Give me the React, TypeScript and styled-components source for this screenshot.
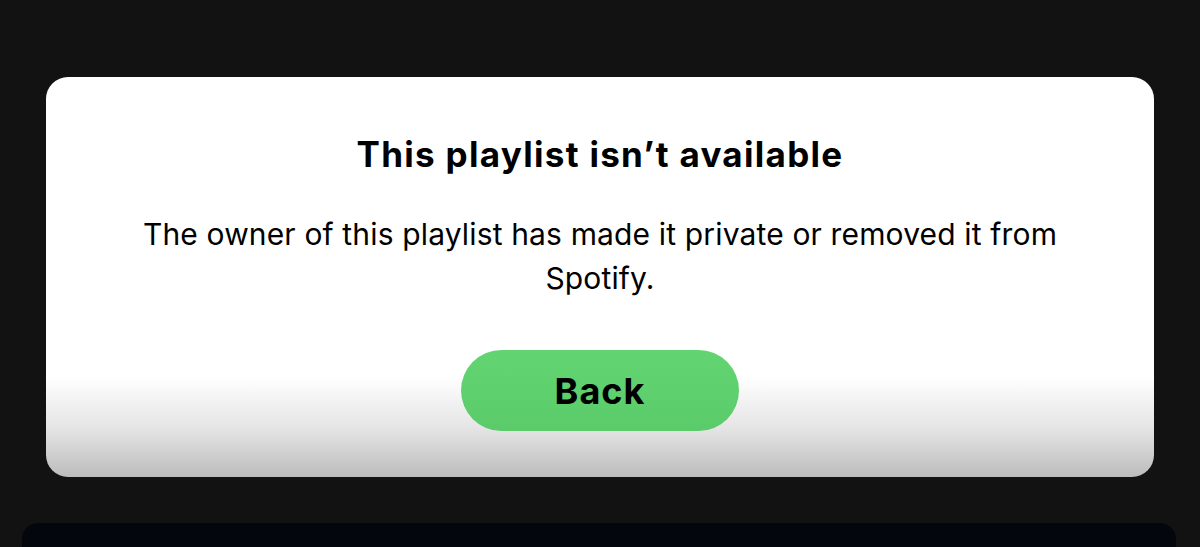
import styled, { createGlobalStyle } from 'styled-components';

const GlobalStyle = createGlobalStyle`
  html, body {
    margin: 0;
    padding: 0;
    background: #121212;
  }
  * {
    box-sizing: border-box;
  }
`;

const App = () => {
  return (
    <>
      <GlobalStyle />
      <StPage>
        <StCard>
          <StTitle>This playlist isn’t available</StTitle>
          <StMessage>
            The owner of this playlist has made it private or removed it from Spotify.
          </StMessage>
          <StBackButton type="button">Back</StBackButton>
        </StCard>
        <StBottomPanel />
      </StPage>
    </>
  );
};

export default App;

const StPage = styled.main`
  display: flex;
  flex-direction: column;

  width: 100%;
  height: 547px;
  padding-top: 77px;
  overflow: hidden;

  background: #121212;
  font-family: Inter, 'Noto Sans', sans-serif;
`;

const StCard = styled.section`
  display: flex;
  flex-direction: column;
  align-items: center;

  height: 400px;
  margin: 0 46px;
  padding: 57px 60px 0;

  border-radius: 22px;
  background: linear-gradient(to bottom, #ffffff 0%, #ffffff 75%, #e4e4e4 88%, #bcbcbc 100%);
  text-align: center;
`;

const StTitle = styled.h1`
  margin: 0;

  color: #000;
  font-size: 35px;
  font-weight: 700;
  line-height: 40px;
  letter-spacing: 1.3px;
`;

const StMessage = styled.p`
  max-width: 960px;
  margin: 38px 0 0;

  color: #000;
  font-size: 30px;
  font-weight: 400;
  line-height: 44px;
  letter-spacing: 0.15px;
`;

const StBackButton = styled.button`
  display: flex;
  justify-content: center;
  align-items: center;

  width: 278px;
  height: 81px;
  margin-top: 50px;

  border: none;
  border-radius: 41px;
  background: linear-gradient(to bottom, #62d572, #5bcb6a);
  color: #000;
  font-family: inherit;
  font-size: 36px;
  font-weight: 700;
  letter-spacing: 1px;
  cursor: pointer;
`;

const StBottomPanel = styled.div`
  flex: 1;

  margin: 46px 24px 0 22px;

  border-radius: 16px 16px 0 0;
  background: #03070d;
`;
